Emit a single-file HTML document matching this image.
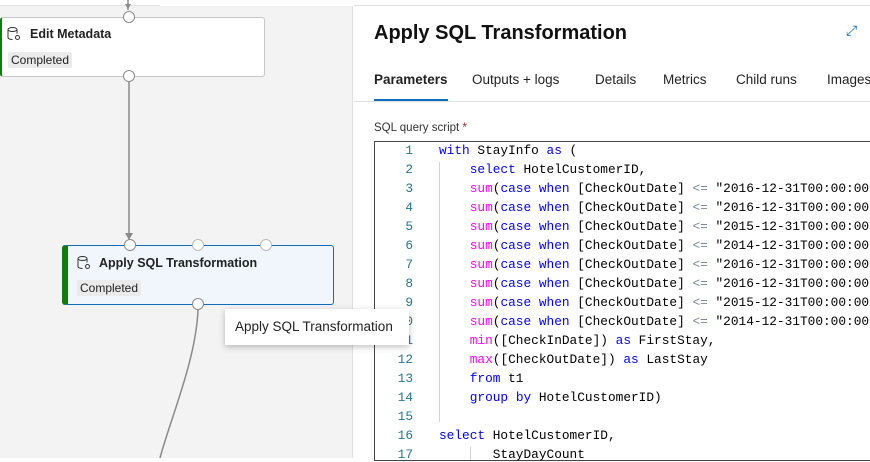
<!DOCTYPE html>
<html><head><style>
*{margin:0;padding:0;box-sizing:border-box}
body{width:870px;height:458px;overflow:hidden;background:#fff;font-family:"Liberation Sans",sans-serif;position:relative}
.left{position:absolute;left:0;top:6px;width:353px;height:452px;background:#f3f3f3;border-right:1px solid #e1e1e1}
.topline{position:absolute;left:0;top:5px;width:870px;height:1px;background:#e1e1e1}
.node{position:absolute;background:#fff;border:1px solid #c8c8c8;border-radius:3px}
.port{position:absolute;width:12px;height:12px;border-radius:50%;background:#fff;border:1px solid #8a8a8a}
.badge{position:absolute;background:#ebebeb;border-radius:2px;font-size:12px;color:#222;padding:1px 3px}
.title{position:absolute;font-size:12.5px;font-weight:bold;color:#222}
.code{position:absolute;left:374px;top:141px;width:500px;height:320px;border:1px solid #444;overflow:hidden}
.ln{position:absolute;left:0;width:40px;text-align:right;font-family:"Liberation Mono",monospace;font-size:12.8px;color:#237893}
.cl{position:absolute;font-family:"Liberation Mono",monospace;font-size:12.8px;color:#000;white-space:pre}
.k{color:#0000ff}.f{color:#ff00ff}.o{color:#778899}
.tab{position:absolute;font-size:13.5px;color:#222}
</style></head><body>
<div class="topline"></div>
<div class="left"></div>
<div style="position:absolute;left:160px;top:0;width:194px;height:6px;background:#fff"></div>
<svg style="position:absolute;left:0;top:0" width="353" height="458">
<line x1="128" y1="0" x2="128" y2="10" stroke="#8a8a8a" stroke-width="1.5"/>
<polygon points="125,4 131,4 128,9" fill="#8a8a8a"/>
<line x1="129" y1="82" x2="129" y2="236" stroke="#8a8a8a" stroke-width="1.5"/>
<polygon points="125,233 133,233 129,240" fill="#8a8a8a"/>
<path d="M198 310 C196 360 170 420 160 458" stroke="#8a8a8a" stroke-width="1.5" fill="none"/>
</svg>
<div class="node" style="left:0;top:17px;width:265px;height:60px;border-left:2px solid #107c10"></div>
<svg style="position:absolute;left:7px;top:27px" width="14" height="14" viewBox="0 0 14 14"><ellipse cx="5.5" cy="2.5" rx="4.5" ry="2" fill="none" stroke="#333"/><path d="M1 2.5v8c0 1.2 2 2 4.5 2M10 2.5v4" fill="none" stroke="#333"/><circle cx="10.5" cy="10.5" r="2" fill="none" stroke="#333"/></svg>
<div class="title" style="left:30px;top:27px">Edit Metadata</div>
<div class="badge" style="left:8px;top:52px">Completed</div>
<div class="port" style="left:123px;top:11px"></div>
<div class="port" style="left:123px;top:70px"></div>
<div class="node" style="left:62px;top:245px;width:272px;height:60px;background:#f0f6fc;border-color:#0f6cbd;border-left:6px solid #107c10"></div>
<svg style="position:absolute;left:77px;top:256px" width="14" height="14" viewBox="0 0 14 14"><ellipse cx="5.5" cy="2.5" rx="4.5" ry="2" fill="none" stroke="#333"/><path d="M1 2.5v8c0 1.2 2 2 4.5 2M10 2.5v4" fill="none" stroke="#333"/><circle cx="10.5" cy="10.5" r="2" fill="none" stroke="#333"/></svg>
<div class="title" style="left:99px;top:256px">Apply SQL Transformation</div>
<div class="badge" style="left:77px;top:280px">Completed</div>
<div class="port" style="left:124px;top:239px"></div>
<div class="port" style="left:192px;top:239px;border-color:#bbb"></div>
<div class="port" style="left:260px;top:239px;border-color:#bbb"></div>
<div class="port" style="left:192px;top:298px"></div>
<div style="position:absolute;left:374px;top:22px;font-size:20px;font-weight:bold;color:#111">Apply SQL Transformation</div>
<div style="position:absolute;left:846px;top:22px;color:#0f6cbd;font-size:14px">⤢</div>
<div class="tab" style="left:374px;top:72px;font-weight:bold">Parameters</div>
<div class="tab" style="left:472px;top:72px">Outputs + logs</div>
<div class="tab" style="left:595px;top:72px">Details</div>
<div class="tab" style="left:663px;top:72px">Metrics</div>
<div class="tab" style="left:736px;top:72px">Child runs</div>
<div class="tab" style="left:827px;top:72px">Images</div>
<div style="position:absolute;left:374px;top:99px;width:74px;height:2px;background:#0f6cbd"></div>
<div style="position:absolute;left:354px;top:101px;width:516px;height:1px;background:#e1e1e1"></div>
<div style="position:absolute;left:374px;top:122px;font-size:11.5px;color:#333">SQL query script <span style="color:#a4262c">*</span></div>
<div class="code">
<div style="position:absolute;left:64px;top:20px;width:1px;height:260px;background:#d3d3d3"></div>
<div style="position:absolute;left:95px;top:305px;width:1px;height:20px;background:#d3d3d3"></div>
</div>
<div id="lines"></div>
<script>
var L=[
'<span class="k">with</span> StayInfo <span class="k">as</span> (',
'    <span class="k">select</span> HotelCustomerID,',
'    <span class="f">sum</span>(<span class="k">case</span> <span class="k">when</span> [CheckOutDate] <span class="o">&lt;=</span> "2016-12-31T00:00:00',
'    <span class="f">sum</span>(<span class="k">case</span> <span class="k">when</span> [CheckOutDate] <span class="o">&lt;=</span> "2016-12-31T00:00:00',
'    <span class="f">sum</span>(<span class="k">case</span> <span class="k">when</span> [CheckOutDate] <span class="o">&lt;=</span> "2015-12-31T00:00:00',
'    <span class="f">sum</span>(<span class="k">case</span> <span class="k">when</span> [CheckOutDate] <span class="o">&lt;=</span> "2014-12-31T00:00:00',
'    <span class="f">sum</span>(<span class="k">case</span> <span class="k">when</span> [CheckOutDate] <span class="o">&lt;=</span> "2016-12-31T00:00:00',
'    <span class="f">sum</span>(<span class="k">case</span> <span class="k">when</span> [CheckOutDate] <span class="o">&lt;=</span> "2016-12-31T00:00:00',
'    <span class="f">sum</span>(<span class="k">case</span> <span class="k">when</span> [CheckOutDate] <span class="o">&lt;=</span> "2015-12-31T00:00:00',
'    <span class="f">sum</span>(<span class="k">case</span> <span class="k">when</span> [CheckOutDate] <span class="o">&lt;=</span> "2014-12-31T00:00:00',
'    <span class="f">min</span>([CheckInDate]) <span class="k">as</span> FirstStay,',
'    <span class="f">max</span>([CheckOutDate]) <span class="k">as</span> LastStay',
'    <span class="k">from</span> t1',
'    <span class="k">group</span> <span class="k">by</span> HotelCustomerID)',
'',
'<span class="k">select</span> HotelCustomerID,',
'       StayDayCount'];
var h='';for(var i=0;i<L.length;i++){var y=143+i*19;
h+='<div class="ln" style="left:373px;top:'+y+'px">'+(i+1)+'</div><div class="cl" style="left:439px;top:'+y+'px">'+L[i]+'</div>';}
document.getElementById('lines').innerHTML=h;
</script>
<div style="position:absolute;left:225px;top:309px;width:184px;height:36px;background:#fff;box-shadow:0 2px 6px rgba(0,0,0,.25);font-size:13.5px;color:#222;padding:10px 0 0 10px">Apply SQL Transformation</div>
</body></html>
